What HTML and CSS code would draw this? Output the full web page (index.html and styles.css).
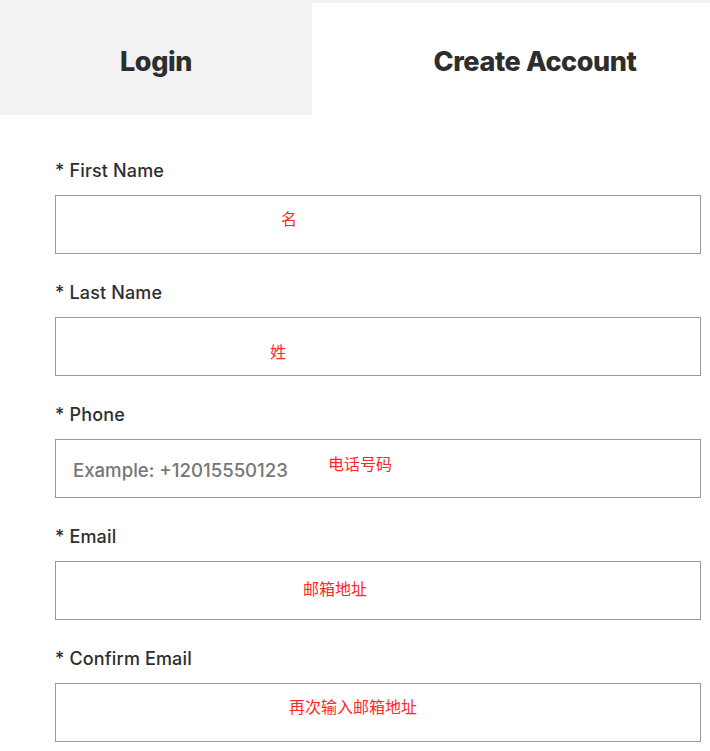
FILE: index.html
```html
<!DOCTYPE html>
<html lang="en">
<head>
<meta charset="utf-8">
<title>Create Account</title>
<link rel="stylesheet" href="styles.css">
</head>
<body>
<div class="tabs">
  <div class="tab tab-inactive">Login</div>
  <div class="tab tab-active">Create Account</div>
</div>
<form class="form">
  <div class="field">
    <label class="label">* First Name</label>
    <div class="box">
      <input class="input" type="text">
      <span class="note note-first">名</span>
    </div>
  </div>
  <div class="field">
    <label class="label">* Last Name</label>
    <div class="box">
      <input class="input" type="text">
      <span class="note note-last">姓</span>
    </div>
  </div>
  <div class="field">
    <label class="label">* Phone</label>
    <div class="box">
      <input class="input" type="text" placeholder="Example: +12015550123">
      <span class="note note-phone">电话号码</span>
    </div>
  </div>
  <div class="field">
    <label class="label">* Email</label>
    <div class="box">
      <input class="input" type="text">
      <span class="note note-email">邮箱地址</span>
    </div>
  </div>
  <div class="field">
    <label class="label">* Confirm Email</label>
    <div class="box">
      <input class="input" type="text">
      <span class="note note-confirm">再次输入邮箱地址</span>
    </div>
  </div>
</form>
</body>
</html>
```
FILE: styles.css
```css
* { box-sizing: border-box; }
html, body { margin: 0; padding: 0; background: #fff; }
body { font-family: "Inter", "Noto Sans", sans-serif; color: #2e2e2e; }

.tabs {
  display: flex;
  height: 115px;
  background: #f2f2f2;
}
.tab {
  display: flex;
  align-items: center;
  justify-content: center;
  font-family: "Inter", sans-serif;
  font-weight: 800;
  font-size: 27px;
  color: #2d2d2d;
  letter-spacing: -0.4px;
}
.tab-inactive {
  width: 312px;
  padding-top: 8px;
  background: #f2f2f2;
}
.tab-active {
  flex: 1;
  margin-top: 3px;
  padding-top: 5px;
  padding-left: 48px;
  background: #fff;
}

.form {
  display: flex;
  flex-direction: column;
  gap: 27px;
  padding: 44px 9px 0 55px;
}
.field {
  display: flex;
  flex-direction: column;
  gap: 12px;
}
.label {
  font-size: 18px;
  line-height: 24px;
  font-weight: 500;
  letter-spacing: 0.15px;
  color: #2e2e2e;
}
.box {
  position: relative;
  height: 59px;
}
.input {
  display: block;
  width: 100%;
  height: 59px;
  margin: 0;
  border: 1px solid #999;
  border-radius: 0;
  padding: 2px 17px 0;
  font-family: "Inter", sans-serif;
  font-size: 18.6px;
  font-weight: 500;
  color: #333;
  background: #fff;
  outline: none;
}
.input::placeholder { color: #777; opacity: 1; }

.note {
  position: absolute;
  font-family: "Noto Sans CJK SC", sans-serif;
  font-size: 16px;
  line-height: 16px;
  color: #ff2626;
  white-space: nowrap;
}
.note-first { left: 226px; top: 15px; }
.note-last { left: 215px; top: 26px; }
.note-phone { left: 273px; top: 16px; }
.note-email { left: 248px; top: 19px; }
.note-confirm { left: 234px; top: 15px; }
```
